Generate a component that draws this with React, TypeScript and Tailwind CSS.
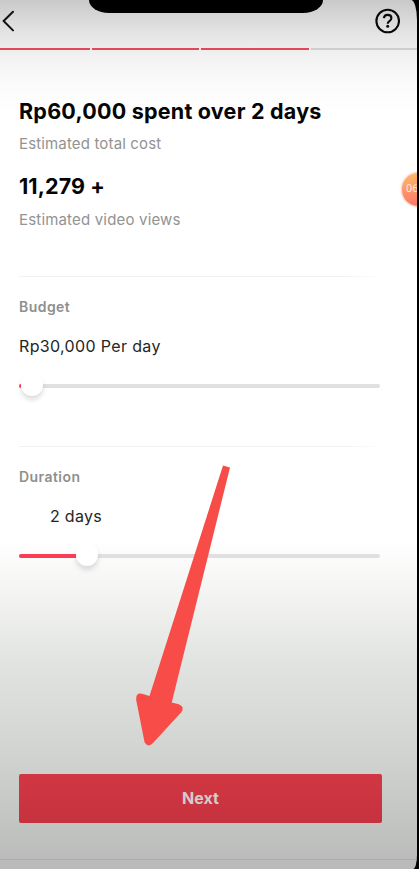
interface SliderProps {
  filled: string;
  thumb: string;
}

const steps = [
  { width: 'w-[90px]', color: 'bg-[#e34858]' },
  { width: 'w-[107px]', color: 'bg-[#e34858]' },
  { width: 'w-[108px]', color: 'bg-[#e34858]' },
  { width: 'flex-1', color: 'bg-[#cecfcd]' },
];

function Slider({ filled, thumb }: SliderProps) {
  return (
    <div className="relative h-1 w-[361px] rounded-full bg-[#dfe0df]">
      <div className={`absolute -top-[11px] h-[23px] w-[22px] rounded-full bg-[#fefffe] shadow-[0_4px_5px_rgba(0,0,0,0.13)] ${thumb}`} />
      <div className={`relative h-1 rounded-l-full bg-[#fb3c55] ${filled}`} />
    </div>
  );
}

function Divider() {
  return <div className="h-px w-[357px] bg-gradient-to-r from-[#f1f2f1] via-[#f0f1f0] via-90% to-[#fbfcfb]" />;
}

export default function App() {
  return (
    <div className="h-[869px] w-[419px] overflow-hidden bg-black font-['Inter',sans-serif]">
      <div className="relative flex h-full w-[417px] flex-col overflow-hidden rounded-tr-[6px_20px] rounded-br-[4px_14px] bg-[linear-gradient(180deg,#c8c9c8_0px,#dfe0df_28px,#f0f1f0_55px,#fafbfa_85px,#fefffe_115px,#fefffe_540px,#f1f2f0_605px,#e2e4e1_660px,#d2d4d1_750px,#c2c4c2_825px,#b8b9b8_869px)]">
        <div className="absolute left-[89px] top-0 h-[13px] w-[234px] rounded-b-[20px_13px] bg-black" />

        <header className="flex h-12 shrink-0 items-start justify-between pl-[2px] pr-[17px] pt-[8px]">
          <svg className="mt-[2px] h-[22px] w-3" viewBox="0 0 12 22" fill="none" stroke="#111" strokeWidth="2" strokeLinecap="round" strokeLinejoin="round">
            <path d="M11 1.8 1.6 11l9.4 9.4" />
          </svg>
          <svg className="h-[26px] w-[26px]" viewBox="0 0 26 26" fill="none" stroke="#090909" strokeWidth="2.1">
            <circle cx="13.7" cy="13" r="11.3" />
            <path d="M9.9 10.2C10.1 8 11.6 6.9 13.7 6.9c2.2 0 3.7 1.3 3.7 3.2 0 1.5-.8 2.3-2 3.1-1.1.8-1.7 1.3-1.7 2.6" />
            <circle cx="13.7" cy="18.3" r="1.5" fill="#090909" stroke="none" />
          </svg>
        </header>

        <div className="flex h-[2px] shrink-0 gap-[2px]">
          {steps.map((step, index) => (
            <div key={index} className={`${step.width} ${step.color}`} />
          ))}
        </div>

        <main className="flex flex-col pl-[19px]">
          <h1 className="mt-[47px] whitespace-nowrap text-[21.5px] font-bold leading-7 tracking-[0.23px] text-[#050505]">Rp60,000 spent over 2 days</h1>
          <p className="mt-[9px] text-[15px] leading-5 tracking-[0.15px] text-[#929392]">Estimated total cost</p>
          <h2 className="mt-[18px] text-[21.5px] font-bold leading-7 tracking-[0.1px] text-[#050505]">11,279 +</h2>
          <p className="mt-[10px] text-[15px] leading-5 tracking-[0.18px] text-[#929392]">Estimated video views</p>

          <section className="mt-[46px]">
            <Divider />
            <h3 className="mt-5 text-[14px] font-semibold leading-5 tracking-[0.45px] text-[#8e8f8e]">Budget</h3>
            <p className="mt-[17px] text-[16px] leading-6 tracking-[0.35px] text-[#252525]">Rp30,000 Per day</p>
            <div className="mt-[26px]">
              <Slider filled="w-[2px]" thumb="left-[2px]" />
            </div>
          </section>

          <section className="mt-[58px]">
            <Divider />
            <h3 className="mt-5 text-[14px] font-semibold leading-5 tracking-[0.45px] text-[#8e8f8e]">Duration</h3>
            <p className="mt-[17px] pl-[31px] text-[16px] leading-6 tracking-[0.3px] text-[#252525]">2 days</p>
            <div className="mt-[26px]">
              <Slider filled="w-[57px]" thumb="left-[57px]" />
            </div>
          </section>
        </main>

        <footer className="mt-auto flex h-[95px] shrink-0 flex-col justify-between">
          <button className="ml-[19px] h-[49px] w-[363px] rounded-[2px] bg-gradient-to-b from-[#d13743] to-[#c5323e] pb-[2px] text-[16px] font-bold text-[#d5cdca]">Next</button>
          <div className="mb-[9px] h-px bg-[#acaeac]" />
        </footer>

        <div className="absolute -right-[19px] top-[172px] flex h-[35px] w-[35px] items-center rounded-full border border-[#ffd0c4] bg-gradient-to-b from-[#fdb866] to-[#fb756b] pl-[4px] font-['Roboto',sans-serif] text-[11px] text-[#ffeadb] shadow-[0_0_2px_#ffc0b0]">06</div>

        <svg className="absolute left-[130px] top-[460px]" width="105" height="290" viewBox="130 460 105 290" fill="#f84c48">
          <path d="M223 465.5 230 467.5 171.7 702.5 178.8 704.3Q185 707 181.3 712.3L153 743Q148.5 748 144.6 742.5L136.2 700Q135.7 692.5 142 693.8L149.5 696Z" />
        </svg>
      </div>
    </div>
  );
}
